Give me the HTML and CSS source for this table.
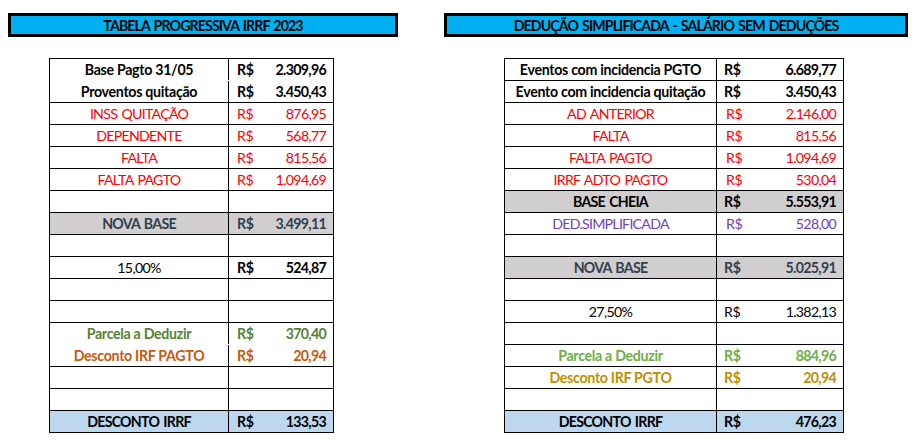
FILE: index.html
```html
<!DOCTYPE html>
<html lang="pt-BR">
<head>
<meta charset="utf-8">
<title>IRRF</title>
<link rel="stylesheet" href="styles.css">
</head>
<body>
<div class="page">
  <section class="panel panel-left">
    <div class="header">TABELA PROGRESSIVA IRRF 2023</div>
    <div class="tbl tbl-left">
      <div class="row noline b"><div class="lbl">Base Pagto 31/05</div><div class="val"><span>R$</span><span class="num">2.309,96</span></div></div>
      <div class="row b"><div class="lbl">Proventos quitação</div><div class="val"><span>R$</span><span class="num">3.450,43</span></div></div>
      <div class="row red"><div class="lbl caps">INSS QUITAÇÃO</div><div class="val"><span>R$</span><span class="num">876,95</span></div></div>
      <div class="row red"><div class="lbl caps">DEPENDENTE</div><div class="val"><span>R$</span><span class="num">568,77</span></div></div>
      <div class="row red"><div class="lbl caps">FALTA</div><div class="val"><span>R$</span><span class="num">815,56</span></div></div>
      <div class="row red"><div class="lbl caps">FALTA PAGTO</div><div class="val"><span>R$</span><span class="num">1.094,69</span></div></div>
      <div class="row"><div class="lbl"></div><div class="val"></div></div>
      <div class="row gray b slate"><div class="lbl caps">NOVA BASE</div><div class="val"><span>R$</span><span class="num">3.499,11</span></div></div>
      <div class="row"><div class="lbl"></div><div class="val"></div></div>
      <div class="row"><div class="lbl num">15,00%</div><div class="val b"><span>R$</span><span class="num">524,87</span></div></div>
      <div class="row"><div class="lbl"></div><div class="val"></div></div>
      <div class="row"><div class="lbl"></div><div class="val"></div></div>
      <div class="row noline b green-dark"><div class="lbl">Parcela a Deduzir</div><div class="val"><span>R$</span><span class="num">370,40</span></div></div>
      <div class="row b orange"><div class="lbl">Desconto IRF PAGTO</div><div class="val"><span>R$</span><span class="num">20,94</span></div></div>
      <div class="row"><div class="lbl"></div><div class="val"></div></div>
      <div class="row"><div class="lbl"></div><div class="val"></div></div>
      <div class="row blue b"><div class="lbl caps">DESCONTO IRRF</div><div class="val"><span>R$</span><span class="num">133,53</span></div></div>
    </div>
  </section>
  <section class="panel panel-right">
    <div class="header">DEDUÇÃO SIMPLIFICADA - SALÁRIO SEM DEDUÇÕES</div>
    <div class="tbl tbl-right">
      <div class="row b"><div class="lbl">Eventos com incidencia PGTO</div><div class="val"><span>R$</span><span class="num">6.689,77</span></div></div>
      <div class="row b"><div class="lbl">Evento com incidencia quitação</div><div class="val"><span>R$</span><span class="num">3.450,43</span></div></div>
      <div class="row red"><div class="lbl caps">AD ANTERIOR</div><div class="val ind"><span>R$</span><span class="num">2.146,00</span></div></div>
      <div class="row red"><div class="lbl caps">FALTA</div><div class="val ind"><span>R$</span><span class="num">815,56</span></div></div>
      <div class="row red"><div class="lbl caps">FALTA PAGTO</div><div class="val ind"><span>R$</span><span class="num">1.094,69</span></div></div>
      <div class="row red"><div class="lbl caps">IRRF ADTO PAGTO</div><div class="val ind"><span>R$</span><span class="num">530,04</span></div></div>
      <div class="row gray b"><div class="lbl caps">BASE CHEIA</div><div class="val"><span>R$</span><span class="num">5.553,91</span></div></div>
      <div class="row purple"><div class="lbl caps">DED.SIMPLIFICADA</div><div class="val ind"><span>R$</span><span class="num">528,00</span></div></div>
      <div class="row"><div class="lbl"></div><div class="val"></div></div>
      <div class="row gray b slate"><div class="lbl caps">NOVA BASE</div><div class="val"><span>R$</span><span class="num">5.025,91</span></div></div>
      <div class="row"><div class="lbl"></div><div class="val"></div></div>
      <div class="row"><div class="lbl num">27,50%</div><div class="val"><span>R$</span><span class="num">1.382,13</span></div></div>
      <div class="row"><div class="lbl"></div><div class="val"></div></div>
      <div class="row b green-light"><div class="lbl">Parcela a Deduzir</div><div class="val"><span>R$</span><span class="num">884,96</span></div></div>
      <div class="row b gold"><div class="lbl">Desconto IRF PGTO</div><div class="val"><span>R$</span><span class="num">20,94</span></div></div>
      <div class="row"><div class="lbl"></div><div class="val"></div></div>
      <div class="row blue b"><div class="lbl caps">DESCONTO IRRF</div><div class="val"><span>R$</span><span class="num">476,23</span></div></div>
    </div>
  </section>
</div>
</body>
</html>
```
FILE: styles.css
```css
html, body {
  margin: 0;
  padding: 0;
  background: #ffffff;
}
body {
  font-family: "Lato", "Liberation Sans", sans-serif;
  font-size: 14.2px;
  letter-spacing: -0.3px;
  color: #000;
}
.page {
  display: flex;
  gap: 46px;
  padding: 13px 0 0 8px;
}
.panel {
  display: flex;
  flex-direction: column;
}
.panel-left { width: 390px; }
.panel-right { width: 464px; }
.header {
  box-sizing: border-box;
  height: 24px;
  border: 3px solid #000;
  background: #00b0f0;
  font-weight: 700;
  text-align: center;
  letter-spacing: -0.9px;
  word-spacing: 1.5px;
  line-height: 17px;
  padding-top: 1px;
  margin-bottom: 21px;
}
.tbl {
  box-sizing: border-box;
  border: 1px solid #000;
  border-bottom: none;
  display: flex;
  flex-direction: column;
}
.tbl-left { margin-left: 41px; width: 285px; }
.tbl-right { margin-left: 60px; width: 340px; }
.row {
  display: grid;
  box-sizing: border-box;
  height: 22px;
  border-bottom: 1px solid #000;
  line-height: 20px;
  padding-top: 1px;
}
.tbl-left .row { grid-template-columns: 179px 1fr; }
.tbl-right .row { grid-template-columns: 212px 1fr; }
.row.noline { border-bottom-color: transparent; }
.lbl {
  border-right: 1px solid #000;
  margin-top: -1px;
  padding-top: 1px;
  text-align: center;
  white-space: nowrap;
}
.lbl.caps { letter-spacing: -0.75px; word-spacing: 1.5px; }
.num { letter-spacing: -0.7px; }
.val {
  display: flex;
  justify-content: space-between;
  padding: 0 7px 0 8px;
  white-space: nowrap;
}
.tbl-right .val { padding-left: 7px; }
.tbl-right .val.ind { padding-left: 9px; }
.b { font-weight: 700; }
.red { color: #ff0000; }
.gray { background: #d0cece; }
.blue { background: #bdd7ee; }
.slate { color: #333f4f; }
.purple { color: #7040b8; }
.green-dark { color: #548235; }
.green-light { color: #70ad47; }
.orange { color: #c55a11; }
.gold { color: #bf8f00; }
```
